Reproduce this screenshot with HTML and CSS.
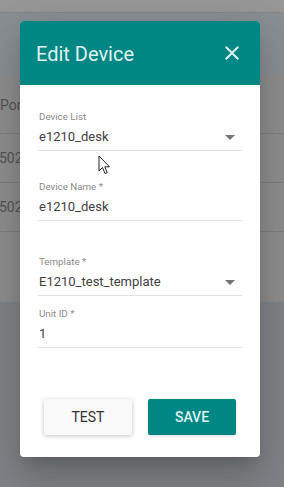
FILE: index.html
```html
<!DOCTYPE html>
<html>
<head>
<meta charset="utf-8">
<link rel="stylesheet" href="styles.css">
</head>
<body>
<div class="page">
  <div class="topbar"></div>
  <div class="toolbar"></div>
  <div class="table">
    <div class="row head"><span>Port</span></div>
    <div class="row"><span>502</span></div>
    <div class="row"><span>502</span></div>
    <div class="row last"></div>
  </div>
  <div class="lower"></div>
</div>

<div class="dialog">
  <div class="dlg-head">
    <span class="dlg-title">Edit Device</span>
    <svg class="close" width="24" height="24" viewBox="0 0 24 24"><path d="M19 6.41L17.59 5 12 10.59 6.41 5 5 6.41 10.59 12 5 17.59 6.41 19 12 13.41 17.59 19 19 17.59 13.41 12z" fill="#dff1f0"/></svg>
  </div>
  <div class="dlg-body">
    <div class="field f1">
      <div class="label">Device List</div>
      <div class="value"><span>e1210_desk</span><i class="arrow"></i></div>
    </div>
    <div class="field f2">
      <div class="label">Device Name *</div>
      <div class="value"><span>e1210_desk</span></div>
    </div>
    <div class="field f3">
      <div class="label">Template *</div>
      <div class="value"><span>E1210_test_template</span><i class="arrow"></i></div>
    </div>
    <div class="field f4">
      <div class="label">Unit ID *</div>
      <div class="value"><span>1</span></div>
    </div>
    <div class="actions">
      <button class="btn test">TEST</button>
      <button class="btn save">SAVE</button>
    </div>
  </div>
</div>

<svg class="cursor" width="14" height="21" viewBox="0 0 14 21"><path d="M1 1 L1 16 L4.5 12.5 L7 18.5 L9.2 17.6 L6.8 11.8 L11.5 11.8 Z" fill="#fff" stroke="#222" stroke-width="1" stroke-linejoin="round"/></svg>
</body>
</html>
```
FILE: styles.css
```css
html, body {
  margin: 0;
  padding: 0;
}
body {
  width: 284px;
  height: 487px;
  overflow: hidden;
  position: relative;
  font-family: Roboto, "Liberation Sans", sans-serif;
  background: #7f8488;
}
.page {
  display: flex;
  flex-direction: column;
  height: 487px;
}
.topbar {
  height: 12px;
  background: #979797;
  border-bottom: 1px solid #858585;
}
.toolbar {
  height: 63px;
  background: #8a8f94;
}
.table {
  background: #8e8e8e;
  display: flex;
  flex-direction: column;
}
.row {
  height: 48px;
  border-bottom: 1px solid #7e7e7e;
  display: flex;
  align-items: center;
  font-size: 14px;
  color: #555;
}
.row span {
  margin-left: -1px;
}
.row.head {
  height: 57px;
  align-items: flex-end;
}
.row.head span {
  padding-bottom: 20px;
  margin-left: 0;
}
.row.last {
  height: 70px;
  border-bottom: none;
}
.lower {
  flex: 1;
  background: #7f8488;
}

.dialog {
  position: absolute;
  left: 20px;
  top: 21px;
  width: 240px;
  background: #fff;
  border-radius: 4px;
  overflow: hidden;
  box-shadow: 0 11px 15px -7px rgba(0,0,0,.18), 0 24px 38px 3px rgba(0,0,0,.12), 0 9px 46px 8px rgba(0,0,0,.08);
}
.dlg-head {
  height: 64px;
  background: #008783;
  display: flex;
  align-items: center;
  justify-content: space-between;
  padding: 0 16px;
}
.dlg-title {
  font-size: 20px;
  color: #dff1f0;
  padding-top: 1px;
}
.close {
  display: block;
}
.dlg-body {
  padding: 26px 18px 22px;
  display: flex;
  flex-direction: column;
}
.field {
  display: flex;
  flex-direction: column;
}
.f2 { margin-top: 30px; }
.f3 { margin-top: 35px; }
.f4 { margin-top: 12px; }
.label {
  font-size: 9.75px;
  line-height: 12px;
  color: #8a8a8a;
  margin-bottom: 4px;
  padding-left: 1px;
}
.value {
  font-size: 13px;
  line-height: 20px;
  color: #404040;
  padding-bottom: 3px;
  padding-left: 1px;
  border-bottom: 1px solid #e0e0e0;
  display: flex;
  align-items: center;
  justify-content: space-between;
  padding-right: 7px;
}
.arrow {
  width: 0;
  height: 0;
  border-left: 5px solid transparent;
  border-right: 5px solid transparent;
  border-top: 5px solid #757575;
  margin-top: 1px;
}
.actions {
  margin-top: 51px;
  display: flex;
  justify-content: center;
  gap: 16px;
}
.btn {
  width: 88px;
  height: 36px;
  border: none;
  border-radius: 2px;
  font-family: Roboto, "Liberation Sans", sans-serif;
  font-size: 14px;
  padding: 0;
}
.btn.test {
  background: #f9f9f9;
  color: #333;
  box-shadow: 0 1px 4px rgba(0,0,0,.25);
}
.btn.save {
  background: #008783;
  color: #dff1f0;
  font-weight: 500;
  box-shadow: 0 1px 3px rgba(0,0,0,.15);
}
.cursor {
  position: absolute;
  left: 98px;
  top: 155px;
}
```
